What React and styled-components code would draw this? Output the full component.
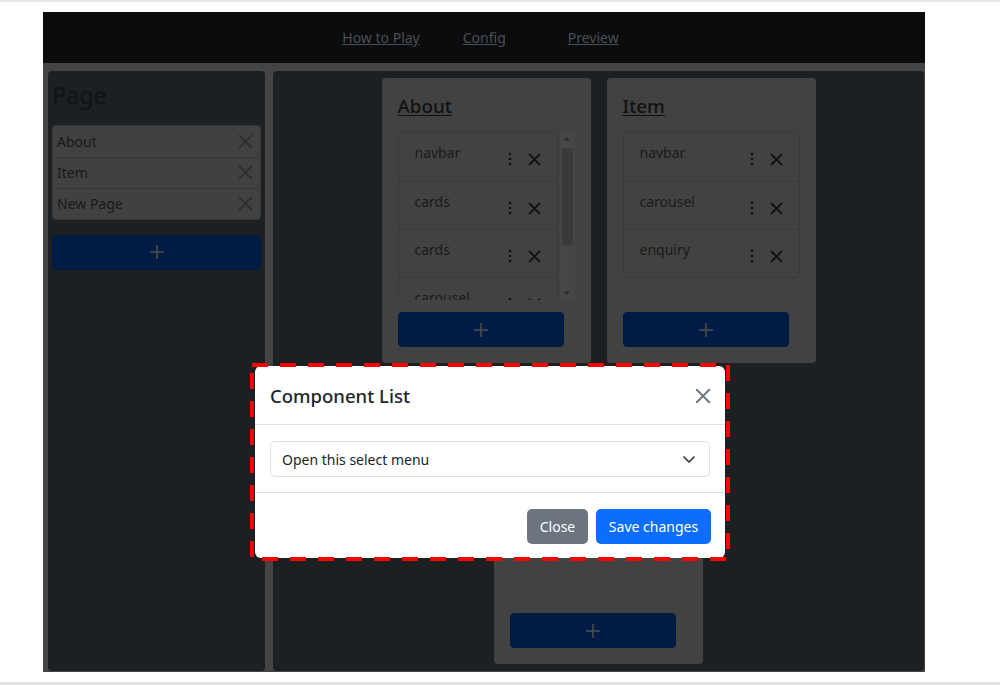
import React from "react"
import styled, { createGlobalStyle } from "styled-components"

const GlobalStyle = createGlobalStyle`
  html, body {
    margin: 0;
    padding: 0;
    background: #ffffff;
  }
  body {
    font-family: "Noto Sans", "Open Sans", sans-serif;
    font-size: 14px;
    color: #151515;
  }
  * {
    box-sizing: border-box;
  }
`

const Screen = styled.div`
  width: 1000px;
  height: 685px;
  display: flex;
  flex-direction: column;
  position: relative;
  overflow: hidden;
`
const Strip = styled.div`
  height: ${props => props.$h}px;
  background: #e3e4e6;
  flex-shrink: 0;
`
const Frame = styled.div`
  margin: 10px 0 10px 43px;
  width: 882px;
  height: 660px;
  background: #444444;
  display: flex;
  flex-direction: column;
`

/* top navigation */
const Nav = styled.nav`
  height: 51px;
  background: #0b0c0e;
  display: flex;
  align-items: center;
  justify-content: center;
  padding-right: 7px;
  flex-shrink: 0;
`
const NavLink = styled.a`
  color: #4b4f53;
  font-size: 14px;
  text-decoration: underline;
  margin-left: ${props => props.$gap ?? 0}px;
`

const Workspace = styled.div`
  flex: 1;
  display: flex;
  gap: 8px;
  padding: 8px 1px 1px 5px;
  min-height: 0;
`

/* left column: pages */
const SidePanel = styled.aside`
  width: 217px;
  flex-shrink: 0;
  background: #1d2023;
  border-radius: 4px;
  padding: 4px;
`
const PanelTitle = styled.h3`
  margin: 7px 0 15px;
  font-size: 23px;
  font-weight: 500;
  line-height: 1.2;
  color: #111315;
`
const PageList = styled.div`
  border: 1px solid #373737;
  border-radius: 4px;
  background: #414141;
`
const PageRow = styled.div`
  height: 31px;
  display: flex;
  align-items: center;
  justify-content: space-between;
  padding: 0 7px 0 4px;
  font-size: 14px;
  color: #181818;
  & + & {
    border-top: 1px solid #373737;
  }
`
const AddButton = styled.button`
  width: ${props => props.$width ?? "100%"};
  height: 35px;
  margin-top: ${props => props.$mt ?? 0}px;
  background: #001c44;
  border: 1px solid #001a3f;
  border-radius: 4px;
  display: flex;
  align-items: center;
  justify-content: center;
  padding: 0;
  flex-shrink: 0;
`

/* board with page cards */
const Board = styled.main`
  flex: 1;
  background: #1d2023;
  border-radius: 4px;
  padding: 7px;
  display: flex;
  flex-wrap: wrap;
  justify-content: center;
  align-content: flex-start;
  gap: 16px;
`
const Card = styled.section`
  width: 209px;
  height: 285px;
  background: #424242;
  border-radius: 4px;
  padding: 16px;
  display: flex;
  flex-direction: column;
`
const CardTitle = styled.h5`
  margin: 1px 0 15px;
  font-size: 18.8px;
  font-weight: 500;
  line-height: 22px;
  color: #111111;
  text-decoration: underline;
  text-underline-offset: 2px;
`
const ScrollArea = styled.div`
  height: 168px;
  margin-bottom: 12px;
  display: flex;
  gap: 2px;
  flex-shrink: 0;
`
const Viewport = styled.div`
  flex: 1;
  min-width: 0;
  overflow: hidden;
`
const ScrollBar = styled.div`
  width: 15px;
  background: #464646;
  display: flex;
  flex-direction: column;
  align-items: center;
`
const ScrollArrow = styled.div`
  height: 14px;
  display: flex;
  align-items: center;
  justify-content: center;
  &::after {
    content: "";
    width: 0;
    height: 0;
    border-left: 3.5px solid transparent;
    border-right: 3.5px solid transparent;
    ${props => (props.$down ? "border-top" : "border-bottom")}: 4px solid #2e2e2e;
  }
`
const ScrollTrack = styled.div`
  flex: 1;
  width: 100%;
  padding: 2px 2px 0;
`
const ScrollThumb = styled.div`
  height: ${props => props.$size}px;
  background: #3a3a3a;
`
const ComponentList = styled.div`
  border: 1px solid #3a3a3a;
  border-radius: 4px;
`
const ComponentRow = styled.div`
  height: 48px;
  padding: 10px 16px 0;
  display: flex;
  justify-content: space-between;
  align-items: flex-start;
  & + & {
    border-top: 1px solid #3a3a3a;
  }
`
const RowName = styled.span`
  font-size: 14px;
  line-height: 20px;
  color: #1a1a1a;
`
const RowTools = styled.div`
  height: 20px;
  margin-top: 6px;
  display: flex;
  align-items: center;
  gap: 16px;
`

/* modal */
const Modal = styled.div`
  position: absolute;
  left: 255px;
  top: 366px;
  width: 470px;
  background: #ffffff;
  border-radius: 6px;
  color: #212529;
`
const Highlight = styled.svg`
  position: absolute;
  left: -5px;
  top: -3px;
  pointer-events: none;
  overflow: visible;
`
const ModalHeader = styled.div`
  display: flex;
  align-items: center;
  justify-content: space-between;
  padding: 16px 14px 15px 15px;
  border-bottom: 1px solid #dee2e6;
`
const ModalTitle = styled.h5`
  margin: 0;
  font-size: 18.5px;
  font-weight: 500;
  line-height: 27px;
`
const IconButton = styled.button`
  border: none;
  background: none;
  padding: 0;
  display: flex;
  width: 16px;
  height: 16px;
`
const ModalBody = styled.div`
  padding: 16px 15px 15px;
`
const SelectBox = styled.div`
  height: 36px;
  border: 1px solid #dee2e6;
  border-radius: 5px;
  padding: 0 14px 0 11px;
  display: flex;
  align-items: center;
  justify-content: space-between;
  font-size: 14px;
  color: #212529;
`
const ModalFooter = styled.div`
  border-top: 1px solid #dee2e6;
  padding: 16px 14px 14px;
  display: flex;
  justify-content: flex-end;
  gap: 8px;
`
const FooterButton = styled.button`
  width: ${props => props.$width}px;
  height: 35px;
  border: none;
  border-radius: 5px;
  background: ${props => props.$bg};
  color: #ffffff;
  font-family: inherit;
  font-size: 14px;
  padding: 0;
`

const CrossIcon = ({ size = 13, stroke = "#111111", width = 1.8 }) => (
  <svg width={size} height={size} viewBox="0 0 13 13" aria-hidden="true">
    <path d="M1 1 L12 12 M12 1 L1 12" stroke={stroke} strokeWidth={width} fill="none" />
  </svg>
)

const DotsIcon = () => (
  <svg width="4" height="14" viewBox="0 0 4 14" aria-hidden="true">
    <circle cx="2" cy="2" r="1.3" fill="#111111" />
    <circle cx="2" cy="7" r="1.3" fill="#111111" />
    <circle cx="2" cy="12" r="1.3" fill="#111111" />
  </svg>
)

const PlusIcon = () => (
  <svg width="16" height="16" viewBox="0 0 16 16" aria-hidden="true">
    <path d="M8 1 V15 M1 8 H15" stroke="#4d4d4d" strokeWidth="1.5" fill="none" />
  </svg>
)

const Chevron = () => (
  <svg width="12" height="7" viewBox="0 0 12 7" aria-hidden="true">
    <path d="M1 1 L6 6 L11 1" stroke="#343a40" strokeWidth="1.7" fill="none" strokeLinecap="round" strokeLinejoin="round" />
  </svg>
)

const pages = ["About", "Item", "New Page"]

// thumb: size of the scrollbar thumb in px, the list holds more rows than fit
const cards = [
  { title: "About", items: ["navbar", "cards", "cards", "carousel"], thumb: 97 },
  { title: "Item", items: ["navbar", "carousel", "enquiry"] },
  { title: "New Page", items: [] },
]

const PageCard = ({ title, items, thumb }) => (
  <Card>
    <CardTitle>{title}</CardTitle>
    <ScrollArea>
      <Viewport>
        {items.length > 0 && (
          <ComponentList>
            {items.map((item, i) => (
              <ComponentRow key={item + i}>
                <RowName>{item}</RowName>
                <RowTools>
                  <DotsIcon />
                  <CrossIcon />
                </RowTools>
              </ComponentRow>
            ))}
          </ComponentList>
        )}
      </Viewport>
      {thumb && (
        <ScrollBar>
          <ScrollArrow />
          <ScrollTrack>
            <ScrollThumb $size={thumb} />
          </ScrollTrack>
          <ScrollArrow $down />
        </ScrollBar>
      )}
    </ScrollArea>
    <AddButton $width="166px">
      <PlusIcon />
    </AddButton>
  </Card>
)

export default function App() {
  return (
    <Screen>
      <GlobalStyle />
      <Strip $h={2} />
      <Frame>
        <Nav>
          <NavLink href="#">How to Play</NavLink>
          <NavLink href="#" $gap={43}>Config</NavLink>
          <NavLink href="#" $gap={62}>Preview</NavLink>
        </Nav>
        <Workspace>
          <SidePanel>
            <PanelTitle>Page</PanelTitle>
            <PageList>
              {pages.map(page => (
                <PageRow key={page}>
                  {page}
                  <CrossIcon size={15} stroke="#2c2c2c" width={1.3} />
                </PageRow>
              ))}
            </PageList>
            <AddButton $mt={15}>
              <PlusIcon />
            </AddButton>
          </SidePanel>
          <Board>
            {cards.map(card => (
              <PageCard key={card.title} {...card} />
            ))}
          </Board>
        </Workspace>
      </Frame>
      <Strip $h={3} />

      <Modal role="dialog">
        <Highlight width="480" height="198">
          <rect x="2" y="2" width="476" height="194" fill="none" stroke="#ff0000" strokeWidth="4" strokeDasharray="16 12" />
        </Highlight>
        <ModalHeader>
          <ModalTitle>Component List</ModalTitle>
          <IconButton aria-label="Close">
            <CrossIcon size={16} stroke="#6c757d" width={1.5} />
          </IconButton>
        </ModalHeader>
        <ModalBody>
          <SelectBox>
            Open this select menu
            <Chevron />
          </SelectBox>
        </ModalBody>
        <ModalFooter>
          <FooterButton $width={61} $bg="#6c757d">Close</FooterButton>
          <FooterButton $width={115} $bg="#0d6efd">Save changes</FooterButton>
        </ModalFooter>
      </Modal>
    </Screen>
  )
}
